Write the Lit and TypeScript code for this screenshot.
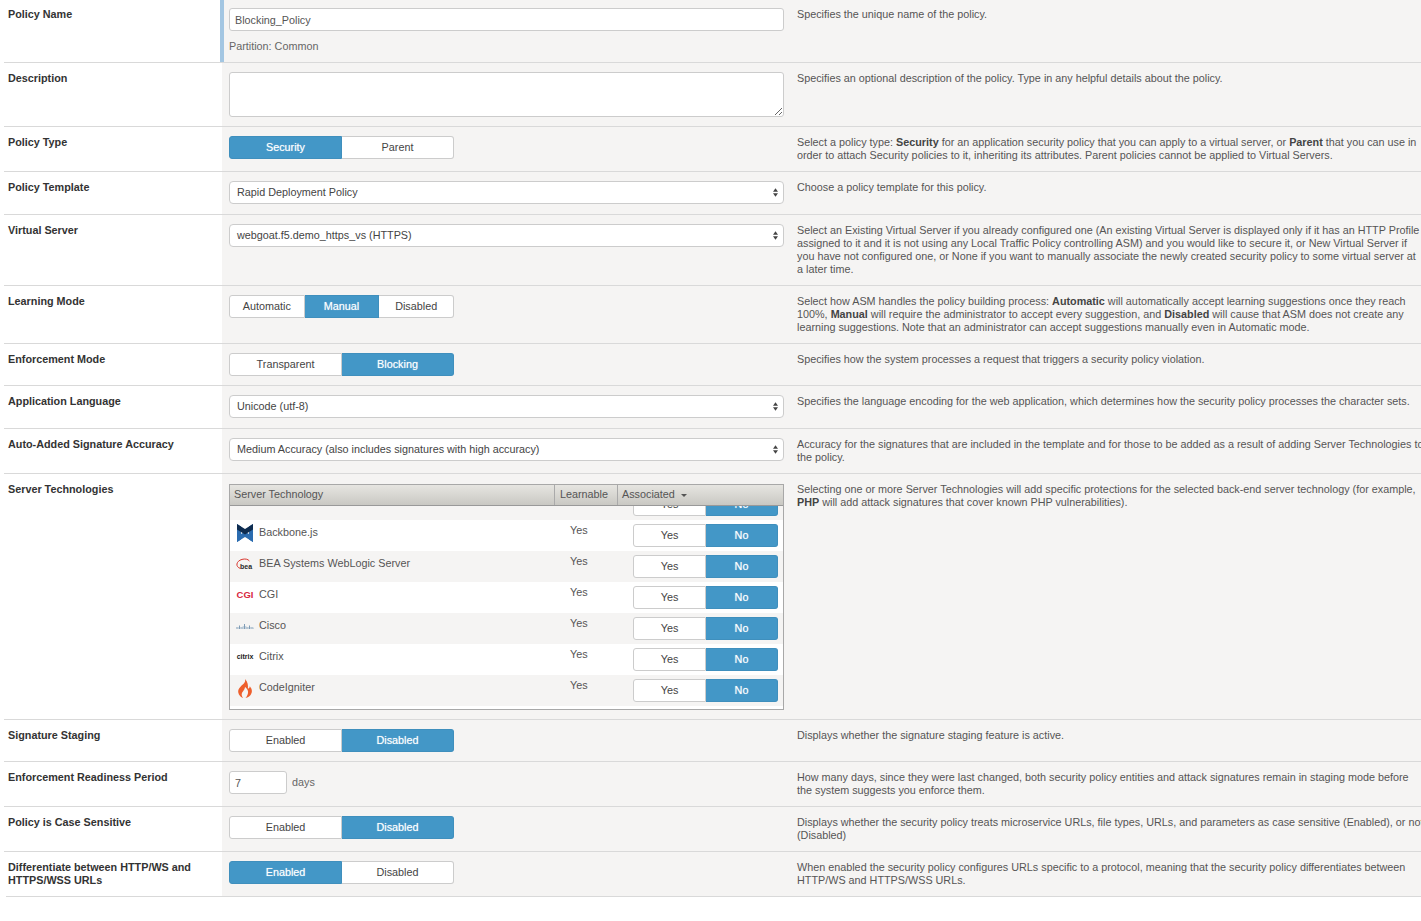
import {LitElement, css, html} from 'lit';
import {customElement} from 'lit/decorators.js';

const backboneIcon = html`<svg class="icon" width="16" height="18" viewBox="0 0 16 18">
  <path fill="#2b6cb0" d="M0 0 L4 2.5 V15.5 L0 18Z M16 0 L12 2.5 V15.5 L16 18Z"/>
  <path fill="#2b6cb0" d="M0 18 L8 13 L16 18 V12.5 L8 7.5 L0 12.5Z"/>
  <path fill="#0e2c50" d="M0 0 L8 5 L16 0 V5.5 L8 10.5 L0 5.5Z"/>
</svg>`;

const beaIcon = html`<svg class="icon" width="18" height="14" viewBox="0 0 18 14">
  <path fill="none" stroke="#d9372f" stroke-width="1" d="M4.6 11.5 C-1 10 0 4 6 2.4 C9 1.6 12 2 13.4 4"/>
  <text class="bea" x="4" y="11.6">bea</text>
</svg>`;

const cgiIcon = html`<span class="icon cgi">CGI</span>`;

const ciscoIcon = html`<svg class="icon" width="18" height="6" viewBox="0 0 18 6">
  <path stroke="#7f9cb6" stroke-width="1" d="M1 4 V6 M3.5 2.5 V6 M6 4 V6 M8.5 1 V6 M11 4 V6 M13.5 2.5 V6 M16 4 V6"/>
  <path stroke="#b4c5d4" stroke-width="1" d="M2.2 4 V6 M4.8 4 V6 M7.2 3 V6 M9.8 3 V6 M12.2 4 V6 M14.8 4 V6 M17.2 4.5 V6"/>
</svg>`;

const citrixIcon = html`<span class="icon citrix">citrix</span>`;

const flameIcon = html`<svg class="icon" width="16" height="19" viewBox="0 0 16 20">
  <path fill="#ee5f2c" d="M8 0 C9 4 6 5 3.5 8 C1 10.5 0 13 1.5 16 C2.5 18 4.5 19.5 6 20 C4 17.5 4 15 6 13 C7 11.5 8 10 8 8.5 C10 10 12 12.5 11 15.5 C10.5 17.5 9.5 19 8.5 20 C11 19.5 14 18 15 14.5 C16 11 14 9 13 7.5 C13 9 12 10 11 10 C11.5 7 11 3 8 0Z"/>
</svg>`;

const technologies = [
  {name: 'Backbone.js', icon: backboneIcon},
  {name: 'BEA Systems WebLogic Server', icon: beaIcon},
  {name: 'CGI', icon: cgiIcon},
  {name: 'Cisco', icon: ciscoIcon},
  {name: 'Citrix', icon: citrixIcon},
  {name: 'CodeIgniter', icon: flameIcon},
];

@customElement('app-root')
export class AppRoot extends LitElement {
  static styles = css`
    :host {
      display: block;
      width: 1421px;
      height: 921px;
      overflow: hidden;
      background: #fff;
      font-family: "Liberation Sans", Arial, sans-serif;
      font-size: 10.8px;
      line-height: 13px;
      color: #555;
    }

    .row {
      display: grid;
      grid-template-columns: 218px 575px 640px;
      margin-left: 4px;
      border-bottom: 1px solid #d9d9d9;
      width: 1500px;
    }

    .row:last-child {
      grid-template-columns: 216px 575px 640px;
      margin-left: 6px;
    }

    .row:last-child .label {
      padding-left: 2px;
    }

    .row:first-child > * {
      padding-top: 8px;
    }

    .row:first-child .label {
      box-shadow: inset -2px 0 0 #a3c6e2;
    }

    .row:first-child .control {
      box-shadow: inset 2px 0 0 #a3c6e2;
    }

    .label,
    .control,
    .help {
      padding-top: 9px;
      padding-bottom: 9px;
    }

    .label {
      padding-left: 4px;
      padding-right: 8px;
      font-weight: bold;
      color: #333;
    }

    .control {
      background: #f5f4f3;
      padding-left: 7px;
      padding-right: 14px;
    }

    .help {
      background: #f5f4f3;
      white-space: nowrap;
      width: 800px;
    }

    .help b {
      color: #444;
    }

    input,
    textarea {
      display: block;
      box-sizing: border-box;
      border: 1px solid #ccc;
      border-radius: 3px;
      background: #fff;
      font: 10.8px/13px "Liberation Sans", Arial, sans-serif;
      color: #555;
      outline: none;
    }

    .text {
      width: 555px;
      height: 23px;
      padding: 0 5px;
    }

    textarea {
      width: 555px;
      height: 45px;
      padding: 4px 5px;
    }

    .partition {
      margin-top: 9px;
      color: #666;
    }

    .select {
      position: relative;
      box-sizing: border-box;
      width: 555px;
      height: 23px;
      margin-bottom: 1px;
      padding: 0 7px;
      border: 1px solid #ccc;
      border-radius: 4px;
      background: #fff;
      color: #444;
      line-height: 21px;
    }

    .select svg {
      position: absolute;
      right: 5px;
      top: 6px;
    }

    .seg {
      display: flex;
      width: 225px;
      height: 23px;
      box-sizing: border-box;
    }

    .seg span {
      flex: 1;
      box-sizing: border-box;
      height: 23px;
      border: 1px solid #ccc;
      border-left-width: 0;
      background: #fff;
      color: #444;
      text-align: center;
      line-height: 21px;
    }

    .seg span:first-child {
      border-left-width: 1px;
      border-radius: 3px 0 0 3px;
    }

    .seg span:last-child {
      border-radius: 0 3px 3px 0;
    }

    .seg span.on {
      background: #4397c7;
      border-color: #3f8fbd;
      color: #fff;
      text-shadow: 0 0 1px rgba(255, 255, 255, 0.6);
    }

    .days {
      display: flex;
      align-items: center;
      gap: 5px;
      color: #666;
    }

    .days input {
      width: 58px;
      height: 23px;
      padding: 0 5px;
    }

    .table {
      box-sizing: border-box;
      width: 555px;
      height: 226px;
      margin-top: 1px;
      border: 1px solid #a8a8a8;
      background: #fff;
    }

    .head {
      display: grid;
      grid-template-columns: 325px 63px 1fr;
      height: 21px;
      box-sizing: border-box;
      border-bottom: 1px solid #999;
      background: linear-gradient(#e6e5e1, #c9c8c3);
      line-height: 18px;
      color: #555;
    }

    .head div {
      padding-left: 5px;
      border-right: 1px solid #aaa;
    }

    .head div:first-child {
      padding-left: 4px;
    }

    .head div:last-child {
      padding-left: 4px;
      border-right: 0;
    }

    .caret {
      display: inline-block;
      margin-left: 3px;
      vertical-align: middle;
      border: 3.5px solid transparent;
      border-top-color: #555;
      border-bottom-width: 0;
    }

    .tr {
      display: grid;
      grid-template-columns: 325px 63px 1fr;
      height: 31px;
      background: #fff;
    }

    .tr:nth-child(odd) {
      background: #f5f4f3;
    }

    .tr.cut {
      grid-template-rows: 14px;
      height: 14px;
      overflow: hidden;
      align-items: end;
    }

    .name {
      display: flex;
      align-items: flex-start;
      padding-top: 6px;
      padding-left: 5px;
      color: #555;
    }

    .slot {
      flex: none;
      display: flex;
      justify-content: center;
      align-items: center;
      width: 20px;
      height: 20px;
      margin-right: 4px;
      margin-top: -3px;
    }

    .icon {
      display: block;
    }

    .bea {
      font: bold 7px "Liberation Sans", Arial, sans-serif;
      fill: #2a2a2a;
    }

    .cgi {
      font: bold 9.5px/12px "Liberation Sans", Arial, sans-serif;
      color: #d8263f;
    }

    .citrix {
      font: bold 7px/10px "Liberation Sans", Arial, sans-serif;
      color: #222;
    }

    .learn {
      padding-top: 4px;
      padding-left: 15px;
    }

    .assoc {
      padding: 4px 5px 4px 15px;
    }

    .tr.cut .assoc {
      padding-top: 0;
      padding-bottom: 4px;
    }

    .assoc .seg {
      width: 145px;
    }
  `;

  seg(options: string[], active: string) {
    return html`<div class="seg">
      ${options.map(
          (o) => html`<span class=${o === active ? 'on' : ''}>${o}</span>`)}
    </div>`;
  }

  select(value: string) {
    return html`<div class="select">
      ${value}
      <svg width="5" height="9" viewBox="0 0 6 10">
        <path fill="#444" d="M3 0 L6 4 H0Z M3 10 L0 6 H6Z"/>
      </svg>
    </div>`;
  }

  row(label: unknown, control: unknown, help: unknown) {
    return html`<div class="row">
      <div class="label">${label}</div>
      <div class="control">${control}</div>
      <div class="help">${help}</div>
    </div>`;
  }

  techTable() {
    return html`<div class="table">
      <div class="head">
        <div>Server Technology</div>
        <div>Learnable</div>
        <div>Associated <i class="caret"></i></div>
      </div>
      <div class="body">
        <div class="tr cut">
          <div></div>
          <div></div>
          <div class="assoc">${this.seg(['Yes', 'No'], 'No')}</div>
        </div>
        ${technologies.map((t) => html`<div class="tr">
          <div class="name"><span class="slot">${t.icon}</span>${t.name}</div>
          <div class="learn">Yes</div>
          <div class="assoc">${this.seg(['Yes', 'No'], 'No')}</div>
        </div>`)}
      </div>
    </div>`;
  }

  render() {
    return html`
      ${this.row('Policy Name', html`
        <input class="text" .value=${'Blocking_Policy'}>
        <div class="partition">Partition: Common</div>`,
        'Specifies the unique name of the policy.')}
      ${this.row('Description', html`<textarea></textarea>`,
        'Specifies an optional description of the policy. Type in any helpful details about the policy.')}
      ${this.row('Policy Type', this.seg(['Security', 'Parent'], 'Security'), html`
        Select a policy type: <b>Security</b> for an application security policy that you can apply to a virtual server, or <b>Parent</b> that you can use in<br>
        order to attach Security policies to it, inheriting its attributes. Parent policies cannot be applied to Virtual Servers.`)}
      ${this.row('Policy Template', this.select('Rapid Deployment Policy'),
        'Choose a policy template for this policy.')}
      ${this.row('Virtual Server', this.select('webgoat.f5.demo_https_vs (HTTPS)'), html`
        Select an Existing Virtual Server if you already configured one (An existing Virtual Server is displayed only if it has an HTTP Profile<br>
        assigned to it and it is not using any Local Traffic Policy controlling ASM) and you would like to secure it, or New Virtual Server if<br>
        you have not configured one, or None if you want to manually associate the newly created security policy to some virtual server at<br>
        a later time.`)}
      ${this.row('Learning Mode', this.seg(['Automatic', 'Manual', 'Disabled'], 'Manual'), html`
        Select how ASM handles the policy building process: <b>Automatic</b> will automatically accept learning suggestions once they reach<br>
        100%, <b>Manual</b> will require the administrator to accept every suggestion, and <b>Disabled</b> will cause that ASM does not create any<br>
        learning suggestions. Note that an administrator can accept suggestions manually even in Automatic mode.`)}
      ${this.row('Enforcement Mode', this.seg(['Transparent', 'Blocking'], 'Blocking'),
        'Specifies how the system processes a request that triggers a security policy violation.')}
      ${this.row('Application Language', this.select('Unicode (utf-8)'),
        'Specifies the language encoding for the web application, which determines how the security policy processes the character sets.')}
      ${this.row('Auto-Added Signature Accuracy', this.select('Medium Accuracy (also includes signatures with high accuracy)'), html`
        Accuracy for the signatures that are included in the template and for those to be added as a result of adding Server Technologies to<br>
        the policy.`)}
      ${this.row('Server Technologies', this.techTable(), html`
        Selecting one or more Server Technologies will add specific protections for the selected back-end server technology (for example,<br>
        <b>PHP</b> will add attack signatures that cover known PHP vulnerabilities).`)}
      ${this.row('Signature Staging', this.seg(['Enabled', 'Disabled'], 'Disabled'),
        'Displays whether the signature staging feature is active.')}
      ${this.row('Enforcement Readiness Period', html`
        <div class="days"><input .value=${'7'}><span>days</span></div>`, html`
        How many days, since they were last changed, both security policy entities and attack signatures remain in staging mode before<br>
        the system suggests you enforce them.`)}
      ${this.row('Policy is Case Sensitive', this.seg(['Enabled', 'Disabled'], 'Disabled'), html`
        Displays whether the security policy treats microservice URLs, file types, URLs, and parameters as case sensitive (Enabled), or not<br>
        (Disabled)`)}
      ${this.row('Differentiate between HTTP/WS and HTTPS/WSS URLs', this.seg(['Enabled', 'Disabled'], 'Enabled'), html`
        When enabled the security policy configures URLs specific to a protocol, meaning that the security policy differentiates between<br>
        HTTP/WS and HTTPS/WSS URLs.`)}
    `;
  }
}
